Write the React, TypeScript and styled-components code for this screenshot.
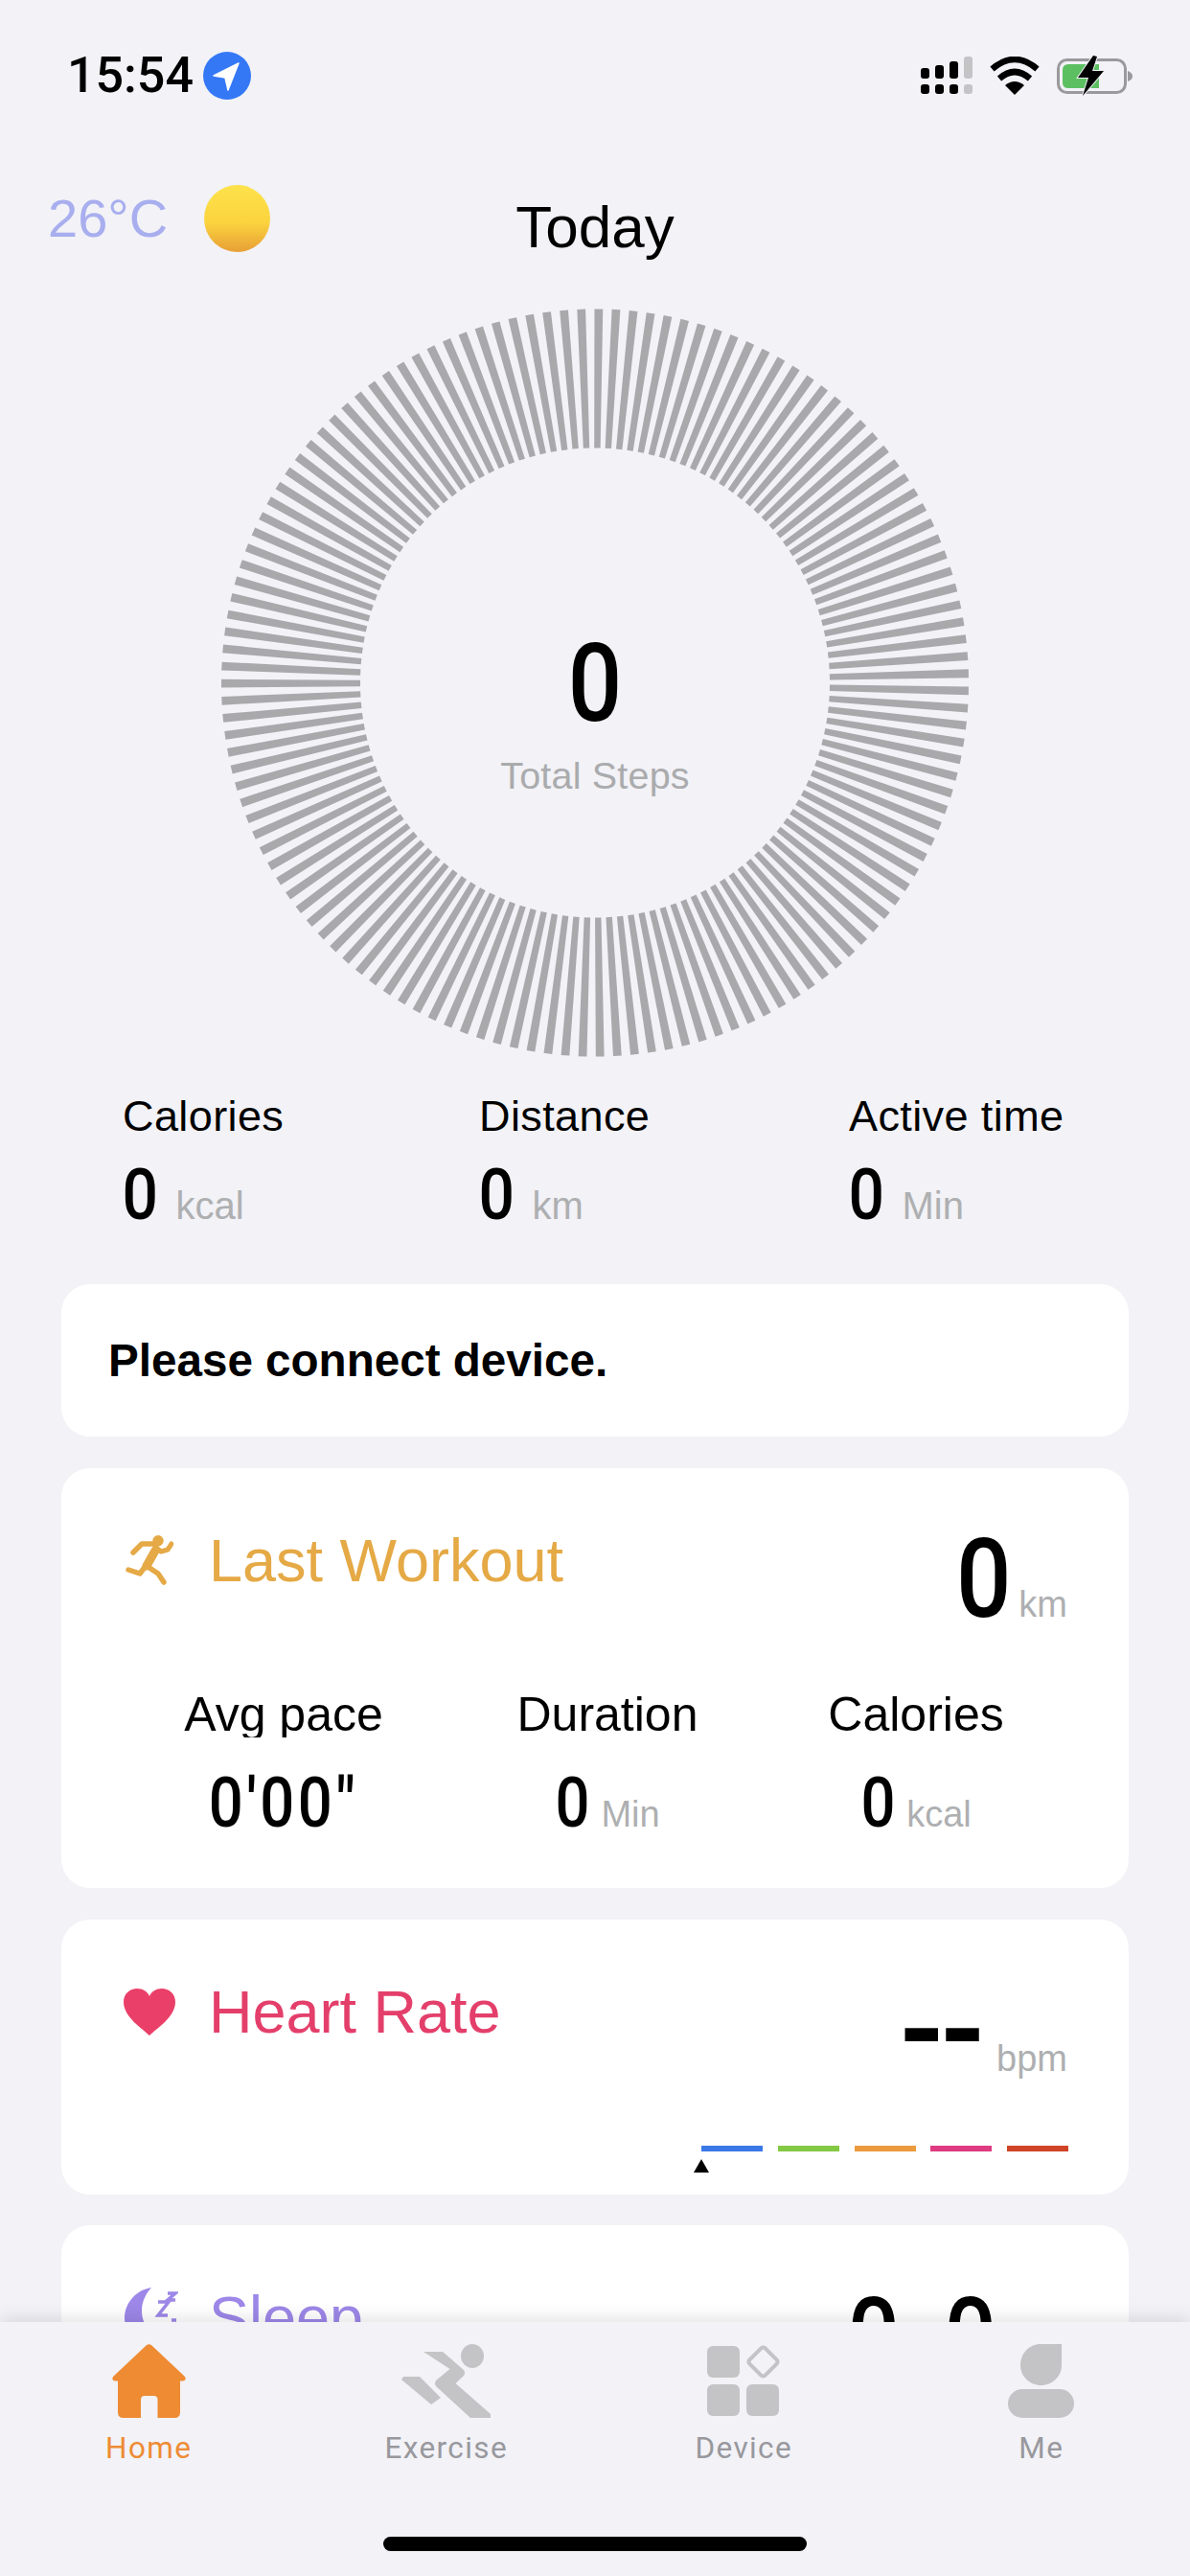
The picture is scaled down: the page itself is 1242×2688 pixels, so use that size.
import React from "react";
import styled, { createGlobalStyle } from "styled-components";

const Global = createGlobalStyle`
  html, body { margin: 0; padding: 0; background: #f2f2f7; }
  body { width: 1242px; height: 2688px; overflow: hidden; font-family: "Liberation Sans", Arial, sans-serif; color: #000; }
  * { box-sizing: border-box; }
`;

const Screen = styled.div`
  width: 1242px; height: 2688px; display: flex; flex-direction: column; background: #f2f2f7; overflow: hidden;
`;
const Main = styled.main`
  flex: 1; min-height: 0; overflow: hidden; display: flex; flex-direction: column; align-items: center;
`;
const StatusBar = styled.div`
  width: 100%; height: 120px; flex: none; padding: 38px 59px 0 70px; display: flex; justify-content: space-between; align-items: flex-start;
`;
const StatusGroup = styled.div`
  height: 82px; display: flex; align-items: center; gap: ${p => p.$gap}px;
`;
const Clock = styled.span`
  font: 500 52px/50px Roboto, sans-serif; color: #000;
`;
const Header = styled.header`
  width: 100%; flex: none; margin-top: 73px; height: 70px; display: grid; grid-template-columns: 1fr auto 1fr; grid-template-rows: 70px; padding: 0 50px; align-items: center;
`;
const Weather = styled.div`
  display: flex; align-items: center; gap: 38px;
`;
const Temp = styled.span`
  font-size: 56px; line-height: 64px; color: #a8aeee;
`;
const Sun = styled.span`
  width: 69px; height: 70px; border-radius: 50%; background: linear-gradient(180deg, #fde24b 0%, #fbd43f 55%, #e89f36 100%);
`;
const Title = styled.h1`
  align-self: start; margin: 9px 0 0; font-weight: 400; font-size: 62px; line-height: 70px; color: #000;
`;
const RingWrap = styled.section`
  position: relative; flex: none; width: 784px; height: 784px; margin-top: 58px;
`;
const RingCenter = styled.div`
  position: absolute; left: 0; right: 0; top: 336px; display: flex; flex-direction: column; align-items: center;
`;
const RingLabel = styled.span`
  font-size: 39.5px; line-height: 46px; margin-top: 16px; letter-spacing: 0.2px; color: #aaabad;
`;
const Stats = styled.section`
  width: 100%; flex: none; margin: 34px 0 61px; padding-left: 128px; display: grid; grid-template-columns: 372px 386px 1fr;
`;
const StatLabel = styled.div`
  font-size: 45px; line-height: 52px; letter-spacing: 0.4px;
`;
const StatValue = styled.div`
  display: flex; align-items: baseline; gap: 18px; margin-top: 18px; height: 70px;
`;
const Num = styled.span`
  display: inline-block; font: 500 ${p => p.$size}px/1 Roboto, sans-serif; color: #000; transform: scaleX(0.88); margin: 0 -0.034em; letter-spacing: ${p => p.$track ?? 0}px;
`;
const Unit = styled.span`
  font-size: ${p => p.$size}px; line-height: 1; color: #aeafb1;
`;
const Card = styled.article`
  flex: none; width: 1114px; background: #fff; border-radius: 30px; margin-bottom: ${p => p.$gap ?? 33}px; height: ${p => p.$h}px;
`;
const Notice = styled(Card)`
  display: flex; align-items: center; padding-left: 49px; font-size: 47.600px; font-weight: 700;
`;
const Panel = styled(Card)`
  display: flex; flex-direction: column; padding: 0 64px 0 0;
`;
const PanelHead = styled.div`
  display: flex; justify-content: space-between; align-items: flex-start; padding-top: 60px;
`;
const PanelTitle = styled.div`
  display: flex; align-items: center; height: 72px;
`;
const IconSlot = styled.span`
  width: 154px; padding-left: ${p => p.$pad}px; flex: none; display: flex; align-items: center;
`;
const TitleText = styled.h2`
  margin: 0; font-weight: 400; font-size: 63px; line-height: 72px; color: ${p => p.$color};
`;
const Readout = styled.div`
  display: flex; align-items: baseline; gap: ${p => p.$gap}px; margin-top: ${p => p.$top}px;
`;
const Dashes = styled.span`
  font: 700 125px/1 Roboto, sans-serif; letter-spacing: -6.5px; color: #000;
`;
const Metrics = styled.div`
  display: grid; grid-template-columns: 340px 336px 308px; padding-left: 62px; margin-top: 61px;
`;
const Metric = styled.div`
  display: flex; flex-direction: column; align-items: center;
`;
const MetricLabel = styled.div`
  font-size: 50px; line-height: 47px; height: 47px; overflow: hidden;
`;
const MetricValue = styled.div`
  display: flex; align-items: baseline; gap: 12px; margin-top: 33px;
`;
const Gauge = styled.div`
  margin: auto -1px 23px auto; width: 383px;
`;
const GaugeBars = styled.div`
  display: flex; justify-content: space-between;
`;
const GaugeBar = styled.span`
  width: 64px; height: 6px; background: ${p => p.$color};
`;
const GaugeMark = styled.div`
  width: 0; height: 0; margin: 8px 0 0 -8px; border-left: 8px solid transparent; border-right: 8px solid transparent; border-bottom: 14px solid #000;
`;
const TabBar = styled.nav`
  position: relative; z-index: 1; flex: none; height: 265px; background: #f2f2f7; box-shadow: 0 -3px 18px rgba(0, 0, 0, 0.12); display: grid; grid-template-columns: repeat(4, 1fr); padding-top: 23px;
`;
const Tab = styled.div`
  display: flex; flex-direction: column; align-items: center;
`;
const TabIcon = styled.svg`
  height: 77px; display: block;
`;
const TabLabel = styled.span`
  margin-top: 12px; font: 400 31.5px/40px Roboto, sans-serif; letter-spacing: 1.4px; color: ${p => (p.$active ? "#ee8b33" : "#98989d")};
`;
const HomeIndicator = styled.div`
  position: absolute; left: 400px; top: 224px; width: 442px; height: 15px; border-radius: 8px; background: #000;
`;

const BAR_COUNT = 135;
const Ring = () => {
  const bars = Array.from({ length: BAR_COUNT }, (_, i) => {
    const a = ((-2.1 + (i * 360) / BAR_COUNT) * Math.PI) / 180;
    const cx = 392, cy = 391.5, ro = 390, ri = 245, wo = 4.4, wi = 3.2;
    const s = Math.sin(a), c = Math.cos(a);
    const pt = (r: number, w: number) => `${(cx + r * s + w * c).toFixed(2)},${(cy - r * c + w * s).toFixed(2)}`;
    return <polygon key={i} points={[pt(ro, -wo), pt(ro, wo), pt(ri, wi), pt(ri, -wi)].join(" ")} />;
  });
  return <svg width="784" height="784" viewBox="0 0 784 784" fill="#a9a9ac">{bars}</svg>;
};

const LocationBadge = () => (
  <svg width="50" height="50" viewBox="0 0 50 50"><circle cx="25" cy="25" r="25" fill="#3478f6" /><path d="M37 12 L11 25 L23 27 L26 40 Z" fill="#fff" stroke="#fff" strokeWidth="1.5" strokeLinejoin="round" /></svg>
);
const Signal = () => (
  <svg width="54" height="40" viewBox="0 0 54 40">
    {[[0, 12], [15, 9], [30, 5], [45, 0]].map(([x, y], i) => (
      <g key={i} fill={i === 3 ? "#c4c4c7" : "#000"}>
        <rect x={x} y={y} width="9" height={23 - y} rx="3" />
        <rect x={x} y="29" width="9" height="10" rx="3" />
      </g>
    ))}
  </svg>
);
const Wifi = () => (
  <svg width="52" height="40" viewBox="0 0 52 40">
    <path d="M26 40 L16 30 Q26 22 36 30 Z" fill="#000" />
    <path d="M10 23 Q26 9 42 23" fill="none" stroke="#000" strokeWidth="6.5" />
    <path d="M2.5 13 Q26 -7 49.5 13" fill="none" stroke="#000" strokeWidth="6.5" />
  </svg>
);
const Battery = () => (
  <svg width="80" height="42" viewBox="0 0 80 42">
    <rect x="1.5" y="4.5" width="70" height="34" rx="9" fill="none" stroke="#9a9a9d" strokeWidth="3" />
    <path d="M74 16 q5 2 5 5.500 q0 3.500 -5 5.500 Z" fill="#9a9a9d" />
    <path d="M6 15 q0 -6 6 -6 H44 V34 H12 q-6 0 -6 -6 Z" fill="#5cc062" />
    <path d="M38 0 L22 23 H33 L27 42 L49 16 H37 L42 1 Z" fill="#000" stroke="#f2f2f7" strokeWidth="2" paintOrder="stroke" />
  </svg>
);
const Runner = () => (
  <svg width="50" height="52" viewBox="0 0 50 52" fill="none" stroke="#e5a945" strokeWidth="5.5" strokeLinecap="round" strokeLinejoin="round">
    <circle cx="34" cy="5.700" r="5.700" fill="#e5a945" stroke="none" />
    <path d="M8 18 L17 9 L28 9" />
    <path d="M31 16 L22 32" strokeWidth="9" />
    <path d="M22 32 L34 40 L40 49" />
    <path d="M31 12 L37 17 L44 15 L48 9" strokeWidth="5" />
    <path d="M21 32 L15 40 L3 36" />
  </svg>
);
const Heart = () => (
  <svg width="54" height="49" viewBox="0 0 54 49"><path d="M27 49 C20 42 0 30 0 14 C0 5 7 0 14 0 C20 0 25 3 27 8 C29 3 34 0 40 0 C47 0 54 5 54 14 C54 30 34 42 27 49 Z" fill="#ea3f68" /></svg>
);
const Moon = () => (
  <svg width="56" height="62" viewBox="0 0 56 62" fill="none">
    <path d="M28 0 C10 3 0 18 0 32 C0 48 14 60 30 60 C36 60 42 58 46 54 C20 52 8 22 28 0 Z" fill="#9d87e8" />
    <path d="M35 15 H46 L35 29 H45 M45 6 H53 L45 13 H53 M49 34 H54" stroke="#9d87e8" strokeWidth="3.500" />
  </svg>
);
const HomeGlyph = () => (
  <TabIcon viewBox="0 0 77 77" width="77">
    <path fillRule="evenodd" fill="#ee8b33" d="M35.500 1.500 Q38.500 -1 41.500 1.500 L76 34 Q78 38 74 38.500 H71 V71 Q71 77 65 77 H47.500 V58 Q47.500 54 43.500 54 H34 Q30 54 30 58 V77 H12 Q6 77 6 71 V38.500 H3 Q-1 38 1 34 Z" />
  </TabIcon>
);
const ExerciseGlyph = () => (
  <TabIcon viewBox="0 0 93 77" width="93" fill="#c4c4c6">
    <ellipse cx="74" cy="12.500" rx="12" ry="12.500" />
    <path d="M23 8 H43 L65 27 Q67 30 65 33 L56.500 41 L93 73 V77 H72 L36 44 Q34 41 36 38 L50.500 26 Z" />
    <path d="M2 34 H19 L41 56 L31 63 L0 37 Z" />
  </TabIcon>
);
const DeviceGlyph = () => (
  <TabIcon viewBox="0 0 76 77" width="76" fill="#c4c4c6">
    <rect x="0" y="2" width="34" height="33" rx="6" />
    <rect x="0" y="42" width="34" height="33" rx="6" />
    <rect x="41" y="42" width="34" height="33" rx="6" />
    <rect x="47" y="7" width="23" height="23" rx="3" transform="rotate(45 58.500 18.500)" fill="none" stroke="#c4c4c6" strokeWidth="4" />
  </TabIcon>
);
const MeGlyph = () => (
  <TabIcon viewBox="0 0 69 77" width="69" fill="#c4c4c6">
    <path d="M13 22 C13 10 22 0 34 0 H56 V22 C56 34 46 43 34.500 43 C23 43 13 34 13 22 Z" />
    <rect x="0" y="47" width="69" height="30" rx="15" />
  </TabIcon>
);

const zones = ["#3b78e7", "#84c944", "#ec9a3e", "#de3b82", "#cf4427"];
const stats = [["Calories", "kcal"], ["Distance", "km"], ["Active time", "Min"]];
const metrics = [["Avg pace", "0'00\"", "", 4], ["Duration", "0", "Min", 0], ["Calories", "0", "kcal", 0]] as const;
const tabs = [
  ["Home", <HomeGlyph />],
  ["Exercise", <ExerciseGlyph />],
  ["Device", <DeviceGlyph />],
  ["Me", <MeGlyph />],
] as const;

export default function App() {
  return (
    <Screen>
      <Global />
      <Main>
        <StatusBar>
          <StatusGroup $gap={10}><Clock>15:54</Clock><LocationBadge /></StatusGroup>
          <StatusGroup $gap={18}><Signal /><Wifi /><Battery /></StatusGroup>
        </StatusBar>
        <Header>
          <Weather><Temp>26°C</Temp><Sun /></Weather>
          <Title>Today</Title>
          <span />
        </Header>
        <RingWrap>
          <Ring />
          <RingCenter><Num $size={113}>0</Num><RingLabel>Total Steps</RingLabel></RingCenter>
        </RingWrap>
        <Stats>
          {stats.map(([label, unit]) => (
            <div key={label}>
              <StatLabel>{label}</StatLabel>
              <StatValue><Num $size={75}>0</Num><Unit $size={40}>{unit}</Unit></StatValue>
            </div>
          ))}
        </Stats>
        <Notice $h={159}>Please connect device.</Notice>
        <Panel $h={438}>
          <PanelHead>
            <PanelTitle><IconSlot $pad={67}><Runner /></IconSlot><TitleText $color="#e5a945">Last Workout</TitleText></PanelTitle>
            <Readout $top={-2} $gap={8}><Num $size={115}>0</Num><Unit $size={38}>km</Unit></Readout>
          </PanelHead>
          <Metrics>
            {metrics.map(([label, value, unit, track]) => (
              <Metric key={label}>
                <MetricLabel>{label}</MetricLabel>
                <MetricValue><Num $size={72} $track={track}>{value}</Num>{unit && <Unit $size={38}>{unit}</Unit>}</MetricValue>
              </Metric>
            ))}
          </Metrics>
        </Panel>
        <Panel $h={287} $gap={32}>
          <PanelHead>
            <PanelTitle><IconSlot $pad={65}><Heart /></IconSlot><TitleText $color="#e43f6b">Heart Rate</TitleText></PanelTitle>
            <Readout $top={-7} $gap={17}><Dashes>--</Dashes><Unit $size={38}>bpm</Unit></Readout>
          </PanelHead>
          <Gauge>
            <GaugeBars>{zones.map(c => <GaugeBar key={c} $color={c} />)}</GaugeBars>
            <GaugeMark />
          </Gauge>
        </Panel>
        <Panel $h={287}>
          <PanelHead>
            <PanelTitle><IconSlot $pad={66}><Moon /></IconSlot><TitleText $color="#9d87e8">Sleep</TitleText></PanelTitle>
            <Readout $top={1} $gap={13}><Num $size={108}>0</Num><Unit $size={38}>h</Unit><Num $size={108}>0</Num><Unit $size={38}>min</Unit></Readout>
          </PanelHead>
        </Panel>
      </Main>
      <TabBar>
        {tabs.map(([label, glyph], i) => (
          <Tab key={label}>{glyph}<TabLabel $active={i === 0}>{label}</TabLabel></Tab>
        ))}
        <HomeIndicator />
      </TabBar>
    </Screen>
  );
}
